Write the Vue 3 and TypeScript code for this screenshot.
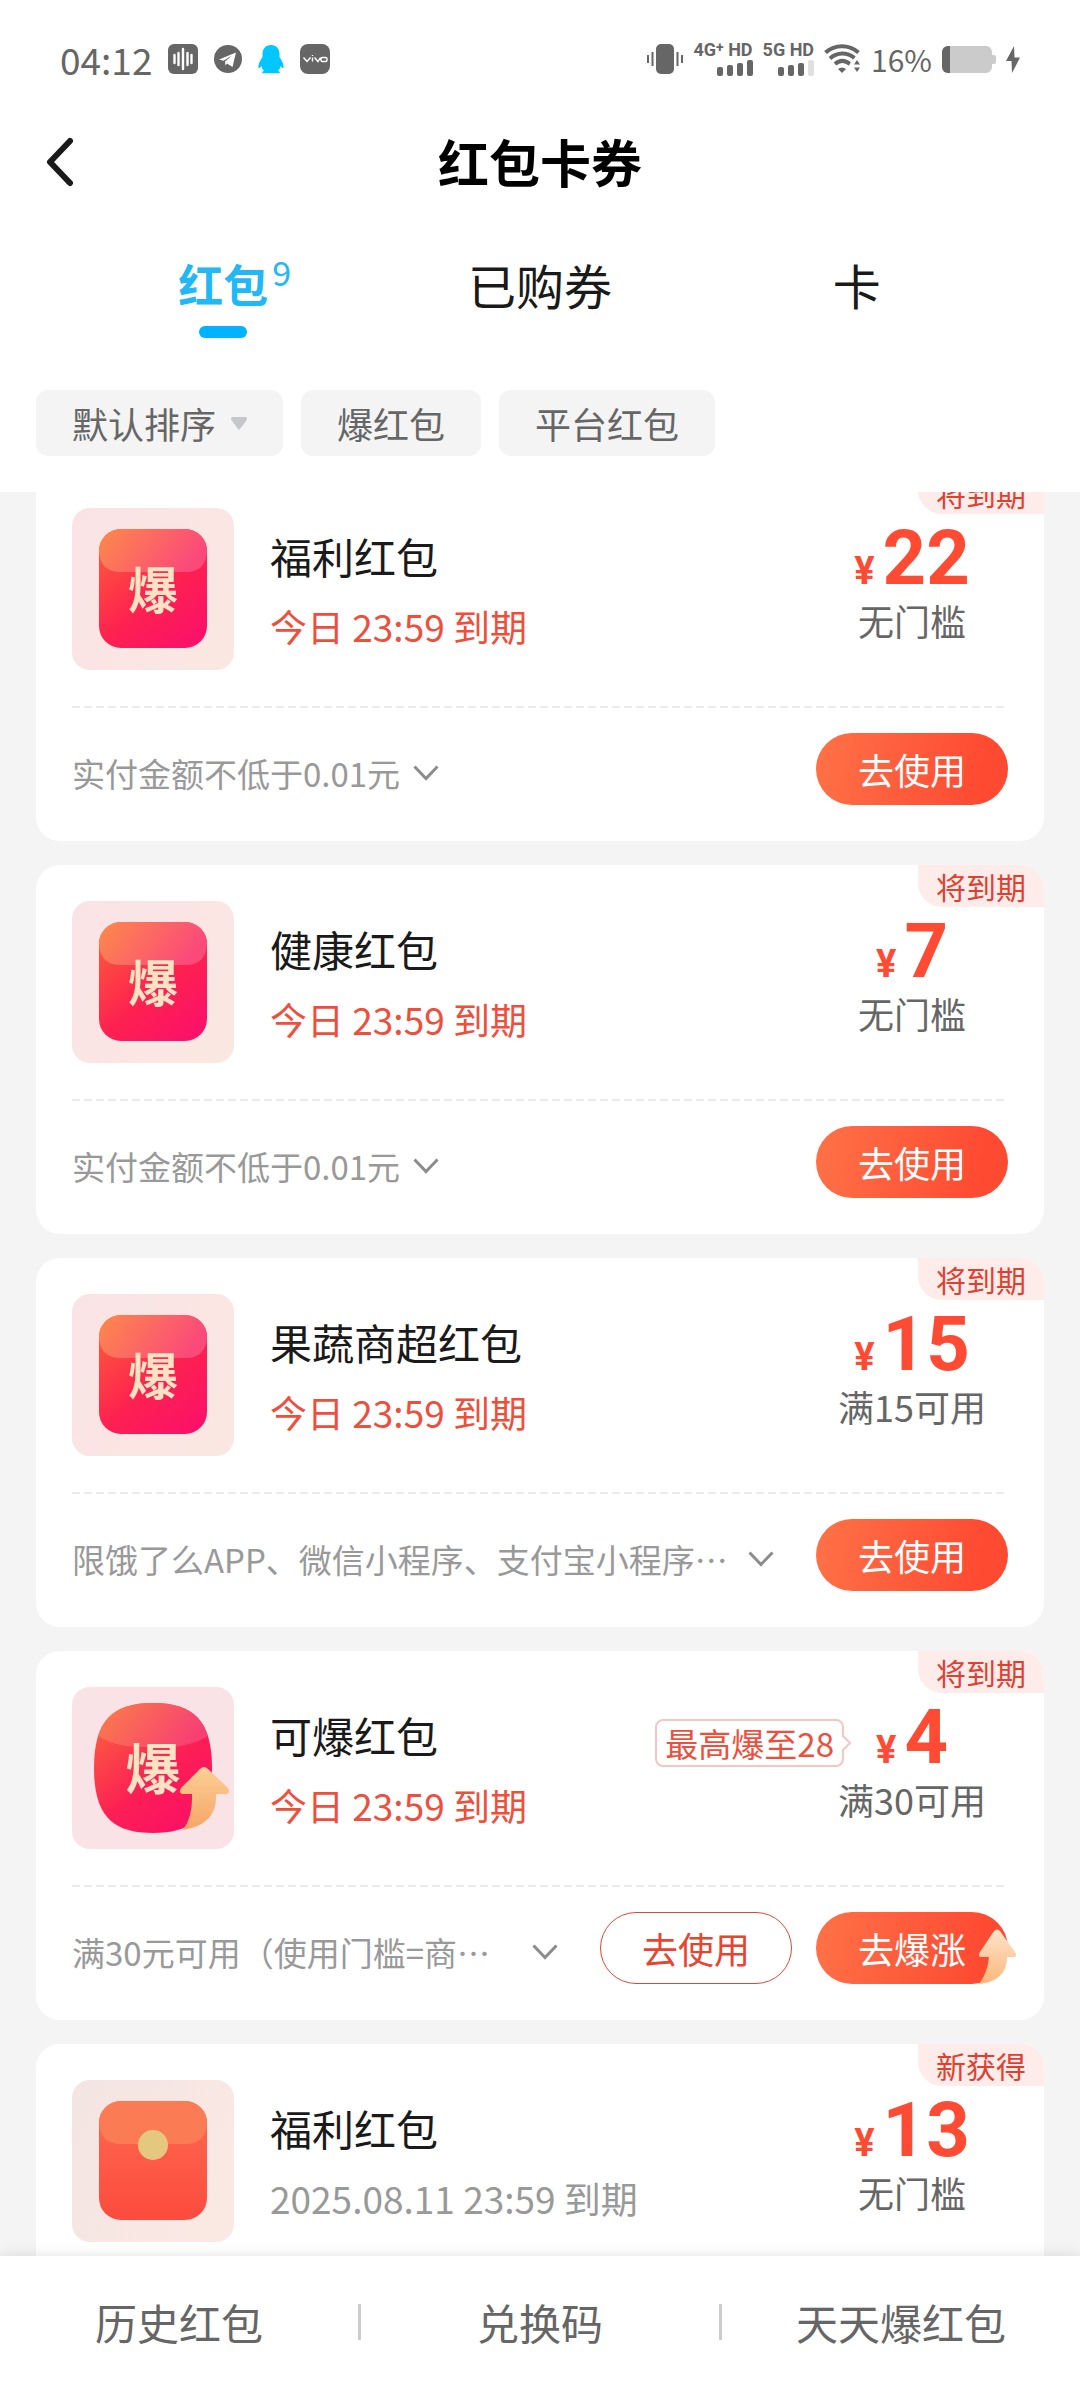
<script setup lang="ts">
import { onMounted, ref } from 'vue'

type IconKind = 'burst' | 'grow' | 'plain'

interface Coupon {
  id: number
  kind: IconKind
  badge: string
  title: string
  expiry: string
  urgent: boolean
  amount: number
  condition: string
  rule?: string
  clipped?: boolean
  boost?: string
}

const coupons: Coupon[] = [
  { id: 1, kind: 'burst', badge: '将到期', title: '福利红包', expiry: '今日 23:59 到期', urgent: true, amount: 22, condition: '无门槛', rule: '实付金额不低于0.01元' },
  { id: 2, kind: 'burst', badge: '将到期', title: '健康红包', expiry: '今日 23:59 到期', urgent: true, amount: 7, condition: '无门槛', rule: '实付金额不低于0.01元' },
  { id: 3, kind: 'burst', badge: '将到期', title: '果蔬商超红包', expiry: '今日 23:59 到期', urgent: true, amount: 15, condition: '满15可用', rule: '限饿了么APP、微信小程序、支付宝小程序…', clipped: true },
  { id: 4, kind: 'grow', badge: '将到期', title: '可爆红包', expiry: '今日 23:59 到期', urgent: true, amount: 4, condition: '满30可用', rule: '满30元可用（使用门槛=商…', clipped: true, boost: '最高爆至28' },
  { id: 5, kind: 'plain', badge: '新获得', title: '福利红包', expiry: '2025.08.11 23:59 到期', urgent: false, amount: 13, condition: '无门槛' },
]

const tabs = [
  { name: '红包', count: 9 },
  { name: '已购券', count: 0 },
  { name: '卡', count: 0 },
]
const activeTab = ref(0)
const filters = ['爆红包', '平台红包']
const links = ['历史红包', '兑换码', '天天爆红包']

const list = ref<HTMLElement | null>(null)
onMounted(() => {
  if (list.value) list.value.scrollTop = 20
})
</script>

<template>
  <div class="page">
    <header class="top">
      <div class="status">
        <div class="status-left">
          <span class="clock">04:12</span>
          <svg width="30" height="30" viewBox="0 0 30 30">
            <rect width="30" height="30" rx="6" fill="#666" />
            <path d="M6.500 11v8M10.500 9v12M15 5v20M19.500 9v12M23.500 11v8" stroke="#fff" stroke-width="2.400" stroke-linecap="round" />
          </svg>
          <svg width="28" height="28" viewBox="0 0 28 28">
            <circle cx="14" cy="14" r="14" fill="#666" />
            <path d="M5 14.500 22 7.500 18.500 22 13 18.500 11.500 20.500 11 16.500 18 10.500 9.500 15.800z" fill="#fff" />
          </svg>
          <svg width="26" height="29" viewBox="0 0 26 29">
            <path d="M13 0C7.500 0 4.500 4 4.500 9v3C2.500 15 0 19 .5 23c.7.500 2-.5 3-2 .3 2 1.200 3.500 2.500 4.800-1.500.4-2 1.200-1.700 2.500h17.400c.3-1.300-.2-2.100-1.700-2.500 1.300-1.300 2.200-2.800 2.500-4.800 1 1.500 2.300 2.500 3 2 .5-4-2-8-4-11V9c0-5-3-9-8.500-9z" fill="#00c8ff" />
          </svg>
          <svg width="30" height="30" viewBox="0 0 30 30">
            <rect width="30" height="30" rx="8" fill="#666" />
            <path d="M3.500 13.500 7 17.500 10.500 13.500M12.500 13.500v4M14.500 13.500 18 17.500 20.500 13.500M22.500 13.500h3q1.500 0 1.500 1.300v1.400q0 1.300-1.500 1.300h-3q-1.500 0-1.500-1.300v-1.400q0-1.300 1.500-1.300zM12.500 11v1" fill="none" stroke="#fff" stroke-width="1.400" />
          </svg>
        </div>
        <div class="status-right">
          <svg width="36" height="30" viewBox="0 0 36 30">
            <rect x="9" width="18" height="30" rx="5" fill="#666" />
            <path d="M1 11v8M5.500 8v14M30.500 8v14M35 11v8" stroke="#666" stroke-width="2" />
          </svg>
          <div class="cell">
            <span>4G<small>+</small> HD</span>
            <svg width="36" height="16" viewBox="0 0 36 16" fill="#666">
              <rect y="7" width="6" height="9" rx="2" /><rect x="10" y="5" width="6" height="11" rx="2" />
              <rect x="20" y="3" width="6" height="13" rx="2" /><rect x="30" width="6" height="16" rx="2" />
            </svg>
          </div>
          <div class="cell">
            <span>5G HD</span>
            <svg width="36" height="16" viewBox="0 0 36 16" fill="#666">
              <rect y="7" width="6" height="9" rx="2" /><rect x="10" y="5" width="6" height="11" rx="2" />
              <rect x="20" y="3" width="6" height="13" rx="2" /><rect x="30" width="6" height="16" rx="2" fill="#e0e0e0" />
            </svg>
          </div>
          <svg width="37" height="30" viewBox="0 0 37 30">
            <path d="M1.500 8.500C11 0 25 0 34.500 8.500M6 14.500c7-6.500 17-6.500 24.500-.5M11 20c4.500-4 10-4 15 0" fill="none" stroke="#666" stroke-width="4" />
            <path d="M14 25q4-3 8 0l-4 4z" fill="#666" />
            <circle cx="33" cy="21.500" r="7" fill="#fff" />
            <path d="M30 20.500 33 16l3 4.500zM30 23.500h6L33 28z" fill="#666" />
          </svg>
          <span class="percent">16%</span>
          <svg width="54" height="27" viewBox="0 0 54 27">
            <path d="M6 0h38a6 6 0 0 1 6 6v3h2q2 0 2 2v5q0 2-2 2h-2v3a6 6 0 0 1-6 6H6a6 6 0 0 1-6-6V6a6 6 0 0 1 6-6z" fill="#cbcbcb" />
            <path d="M8 0v27H6a6 6 0 0 1-6-6V6a6 6 0 0 1 6-6z" fill="#666" />
          </svg>
          <svg width="14" height="27" viewBox="0 0 14 27">
            <path d="M8 0 0 15h5.500L6 27l8-15.500H8.500z" fill="#666" />
          </svg>
        </div>
      </div>

      <div class="nav">
        <button class="back" type="button" aria-label="返回">
          <svg width="28" height="50" viewBox="0 0 28 50">
            <path d="M24 4 4 25l20 21" fill="none" stroke="#1a1a1a" stroke-width="6" stroke-linecap="round" stroke-linejoin="round" />
          </svg>
        </button>
        <h1>红包卡券</h1>
      </div>

      <div class="tabs">
        <button v-for="(tab, i) in tabs" :key="tab.name" type="button" class="tab" :class="{ active: i === activeTab }" @click="activeTab = i">
          <span class="tab-name">{{ tab.name }}<span v-if="tab.count" class="count">{{ tab.count }}</span></span>
        </button>
      </div>

      <div class="filters">
        <button class="chip" type="button">
          默认排序
          <svg width="16" height="13" viewBox="0 0 16 13">
            <path d="M1 0h14q1.500 1 .7 3L9 12q-1 1.500-2 0L.3 3Q-.5 1 1 0z" fill="#c4c8c8" />
          </svg>
        </button>
        <button v-for="f in filters" :key="f" class="chip" type="button">{{ f }}</button>
      </div>
    </header>

    <main ref="list" class="list">
      <article v-for="c in coupons" :key="c.id" class="card">
        <span class="badge">{{ c.badge }}</span>
        <div class="head">
          <svg v-if="c.kind === 'burst'" class="tile" viewBox="0 0 162 162">
            <defs>
              <linearGradient id="burstBg" x1="0" y1="0" x2="1" y2=".6"><stop offset="0" stop-color="#f9e3e6" /><stop offset="1" stop-color="#fbe7e2" /></linearGradient>
              <linearGradient id="burstBody" x1="0" y1="0" x2=".8" y2="1"><stop offset="0" stop-color="#ff6238" /><stop offset=".6" stop-color="#fd2150" /><stop offset="1" stop-color="#fb1268" /></linearGradient>
              <linearGradient id="burstFlap" x1="0" y1="0" x2="1" y2=".3"><stop offset="0" stop-color="#fd8a4a" /><stop offset="1" stop-color="#fb4a7a" /></linearGradient>
            </defs>
            <rect width="162" height="162" rx="18" fill="url(#burstBg)" />
            <rect x="27" y="21" width="108" height="119" rx="22" fill="url(#burstBody)" />
            <path d="M27 43a22 22 0 0 1 22-22h64a22 22 0 0 1 22 22q-1 21-22 21H49q-21 0-22-21z" fill="url(#burstFlap)" />
            <text x="81" y="101" text-anchor="middle" class="glyph" font-size="50">爆</text>
          </svg>
          <svg v-else-if="c.kind === 'grow'" class="tile" viewBox="0 0 162 162">
            <defs>
              <linearGradient id="growBody" x1="0" y1="0" x2=".8" y2="1"><stop offset="0" stop-color="#fb6a3c" /><stop offset=".6" stop-color="#fc1f55" /><stop offset="1" stop-color="#fb0f66" /></linearGradient>
              <linearGradient id="growFlap" x1="0" y1="0" x2="1" y2=".3"><stop offset="0" stop-color="#fb8146" /><stop offset="1" stop-color="#f83f74" /></linearGradient>
              <linearGradient id="growArrow" x1="0" y1="0" x2="0" y2="1"><stop offset="0" stop-color="#fbcf96" /><stop offset="1" stop-color="#f7a565" /></linearGradient>
              <clipPath id="growClip"><path d="M81 16c40 0 59 17 59 65s-19 65-59 65-59-17-59-65 19-65 59-65z" /></clipPath>
            </defs>
            <rect width="162" height="162" rx="18" fill="#f9e3e6" />
            <g clip-path="url(#growClip)">
              <rect x="22" y="16" width="118" height="130" fill="url(#growBody)" />
              <path d="M22 16h118v30q-18 14-48 14H70q-30 0-48-14z" fill="url(#growFlap)" />
            </g>
            <text x="81" y="102" text-anchor="middle" class="glyph" font-size="55">爆</text>
            <path d="M128 82q4-4 8 0l20 19q3 5-2 6h-10q2 30-33 36 10-14 9-36h-9q-5-1-2-6z" fill="url(#growArrow)" />
          </svg>
          <svg v-else class="tile" viewBox="0 0 162 162">
            <defs>
              <linearGradient id="plainBg" x1="0" y1="0" x2="1" y2=".5"><stop offset="0" stop-color="#f3e5e3" /><stop offset="1" stop-color="#fae8e3" /></linearGradient>
              <linearGradient id="plainBody" x1="0" y1="0" x2="0" y2="1"><stop offset="0" stop-color="#ff6a50" /><stop offset="1" stop-color="#fb4b3e" /></linearGradient>
            </defs>
            <rect width="162" height="162" rx="18" fill="url(#plainBg)" />
            <rect x="27" y="21" width="108" height="119" rx="22" fill="url(#plainBody)" />
            <path d="M27 43a22 22 0 0 1 22-22h64a22 22 0 0 1 22 22q-1 21-22 21H49q-21 0-22-21z" fill="#fa7b54" />
            <circle cx="81" cy="65" r="15" fill="#e5c880" />
          </svg>
          <div class="info">
            <h2>{{ c.title }}</h2>
            <p :class="{ urgent: c.urgent }">{{ c.expiry }}</p>
          </div>
          <div class="value">
            <div class="price">
              <span v-if="c.boost" class="boost">{{ c.boost }}
                <svg width="9" height="16" viewBox="0 0 9 16"><path d="M0 0 8 8 0 16" fill="#fff" stroke="#f7c6c2" stroke-width="2" /></svg>
              </span>
              <span class="yen">¥</span><span class="num">{{ c.amount }}</span>
            </div>
            <p>{{ c.condition }}</p>
          </div>
        </div>
        <div class="dash"></div>
        <div v-if="c.rule" class="foot">
          <div class="rule">
            <span :class="{ clipped: c.clipped }">{{ c.rule }}</span>
            <svg width="26" height="16" viewBox="0 0 26 16">
              <path d="M1.500 1.500 13 13.500 24.500 1.500" fill="none" stroke="#8c8c8c" stroke-width="3" />
            </svg>
          </div>
          <button class="btn" :class="{ outline: c.boost }" type="button">去使用</button>
          <button v-if="c.boost" class="btn" type="button">
            去爆涨
            <svg class="rise" width="38" height="55" viewBox="0 0 38 55">
              <defs>
                <linearGradient id="rise" x1="0" y1="0" x2="0" y2="1"><stop offset="0" stop-color="#fde3cc" /><stop offset="1" stop-color="#fdb778" /></linearGradient>
              </defs>
              <path d="M15 2q3-3 6 0l15 21q3 5-2 5h-6Q28 52 0 55q9-12 10-27H3q-5 0-2-5z" fill="url(#rise)" />
            </svg>
          </button>
        </div>
      </article>
    </main>

    <nav class="bottom">
      <a v-for="l in links" :key="l" href="#">{{ l }}</a>
    </nav>
  </div>
</template>

<style>
body {
  margin: 0;
  background: #f4f4f4;
}
</style>

<style scoped>
.page {
  display: flex;
  flex-direction: column;
  height: 100vh;
  font-family: "Noto Sans CJK SC", sans-serif;
  color: #1a1a1a;
  background: #f4f4f4;
}
h1, h2, p {
  margin: 0;
  font-weight: 400;
}
button {
  margin: 0;
  padding: 0;
  border: 0;
  background: none;
  font: inherit;
  color: inherit;
}
svg {
  display: block;
  flex: none;
}
.top {
  flex: none;
  background: #fff;
  padding-bottom: 36px;
}
.status {
  display: flex;
  align-items: center;
  justify-content: space-between;
  height: 118px;
  padding: 0 60px;
  color: #666;
}
.status-left,
.status-right {
  display: flex;
  align-items: center;
}
.status-left {
  gap: 16px;
}
.status-right {
  gap: 10px;
}
.clock {
  font-size: 37px;
  line-height: 40px;
}
.percent {
  font-size: 30px;
  line-height: 32px;
}
.cell {
  display: flex;
  flex-direction: column;
  align-items: flex-end;
  gap: 2px;
  font: 700 18px/16px Roboto, sans-serif;
  white-space: nowrap;
}
.cell small {
  font-size: 14px;
  line-height: 8px;
  vertical-align: 4px;
}
.nav {
  position: relative;
  display: flex;
  align-items: flex-start;
  justify-content: center;
  height: 77px;
  padding-top: 13px;
}
.back {
  position: absolute;
  left: 46px;
  top: 19px;
}
h1 {
  font-size: 51px;
  line-height: 60px;
  font-weight: 700;
  color: #000;
}
.tabs {
  display: flex;
  padding: 46px 65px 0;
}
.tab {
  flex: 1;
  display: flex;
  flex-direction: column;
  align-items: center;
  gap: 12px;
  font-size: 48px;
  line-height: 60px;
}
.tab::after {
  content: "";
  width: 48px;
  height: 12px;
  border-radius: 6px;
}
.active {
  color: #22b8f5;
  font-size: 45px;
  font-weight: 700;
}
.active::after {
  background: #00b2ff;
}
.tab-name {
  position: relative;
}
.count {
  position: absolute;
  left: 100%;
  top: -12px;
  margin-left: 4px;
  font-size: 34px;
  line-height: 60px;
  font-weight: 400;
}
.filters {
  display: flex;
  gap: 18px;
  padding: 52px 36px 0;
}
.chip {
  display: flex;
  align-items: center;
  gap: 15px;
  height: 66px;
  padding: 0 36px;
  border-radius: 12px;
  background: #f4f4f4;
  color: #666;
  font-size: 36px;
  line-height: 48px;
}
.list {
  flex: 1;
  min-height: 0;
  display: flex;
  flex-direction: column;
  gap: 24px;
  padding: 0 36px 24px;
  overflow-y: auto;
  scrollbar-width: none;
}
.card {
  position: relative;
  flex: none;
  border-radius: 24px;
  background: #fff;
}
.badge {
  position: absolute;
  top: 0;
  right: 0;
  padding: 0 18px;
  border-radius: 0 24px;
  background: #feeceb;
  color: #e0402f;
  font-size: 30px;
  line-height: 42px;
}
.head {
  display: flex;
  padding: 36px;
}
.tile {
  width: 162px;
  height: 162px;
}
.glyph {
  font-family: "Noto Sans CJK SC", sans-serif;
  font-weight: 700;
  fill: #fde3c4;
}
.info {
  flex: 1;
  min-width: 0;
  padding: 18px 0 0 36px;
}
h2 {
  font-size: 42px;
  line-height: 60px;
}
.info p {
  margin-top: 16px;
  font-size: 37px;
  line-height: 48px;
  color: #999;
}
.info p.urgent {
  color: #ee4f3d;
}
.value {
  display: flex;
  flex-direction: column;
  align-items: center;
  width: 192px;
  padding-top: 14px;
}
.price {
  position: relative;
  display: flex;
  align-items: baseline;
  gap: 8px;
  color: #ff4b33;
  font-family: Roboto, sans-serif;
  font-weight: 700;
}
.yen {
  font-size: 38px;
  line-height: 40px;
}
.num {
  font-size: 76px;
  line-height: 72px;
}
.value p {
  margin-top: 2px;
  font-size: 36px;
  line-height: 48px;
  color: #666;
}
.boost {
  position: absolute;
  right: 100%;
  top: 18px;
  margin-right: 32px;
  padding: 0 8px;
  border: 2px solid #f7c6c2;
  border-radius: 8px;
  color: #ee4f3d;
  font-family: "Noto Sans CJK SC", sans-serif;
  font-size: 33px;
  line-height: 44px;
  font-weight: 400;
  white-space: nowrap;
}
.boost svg {
  position: absolute;
  left: 100%;
  top: 14px;
}
.dash {
  height: 2px;
  margin: 0 36px;
  background: repeating-linear-gradient(90deg, #ebebeb 0 8px, transparent 8px 12px);
}
.foot {
  display: flex;
  gap: 24px;
  padding: 25px 36px 36px;
}
.rule {
  flex: 1;
  min-width: 0;
  display: flex;
  align-items: center;
  gap: 13px;
  height: 72px;
  padding: 8px 18px 0 0;
  box-sizing: border-box;
  color: #999;
  font-size: 33px;
  line-height: 48px;
  white-space: nowrap;
}
.rule .clipped {
  flex: 1;
  min-width: 0;
}
.btn {
  position: relative;
  width: 192px;
  height: 72px;
  border-radius: 36px;
  background: linear-gradient(100deg, #ff7247, #ff4a32 85%);
  color: #fff;
  font-size: 36px;
  line-height: 72px;
}
.outline {
  box-sizing: border-box;
  border: 1px solid #d9483b;
  background: #fff;
  color: #e8442f;
  line-height: 70px;
}
.rise {
  position: absolute;
  right: -9px;
  bottom: 0;
}
.bottom {
  position: relative;
  flex: none;
  display: flex;
  align-items: center;
  height: 132px;
  background: #fff;
  box-shadow: 0 0 14px rgba(0, 0, 0, 0.12);
}
.bottom a {
  flex: 1;
  color: #666;
  font-size: 42px;
  line-height: 36px;
  text-align: center;
  text-decoration: none;
}
.bottom a + a {
  border-left: 3px solid #ccc;
}
</style>
